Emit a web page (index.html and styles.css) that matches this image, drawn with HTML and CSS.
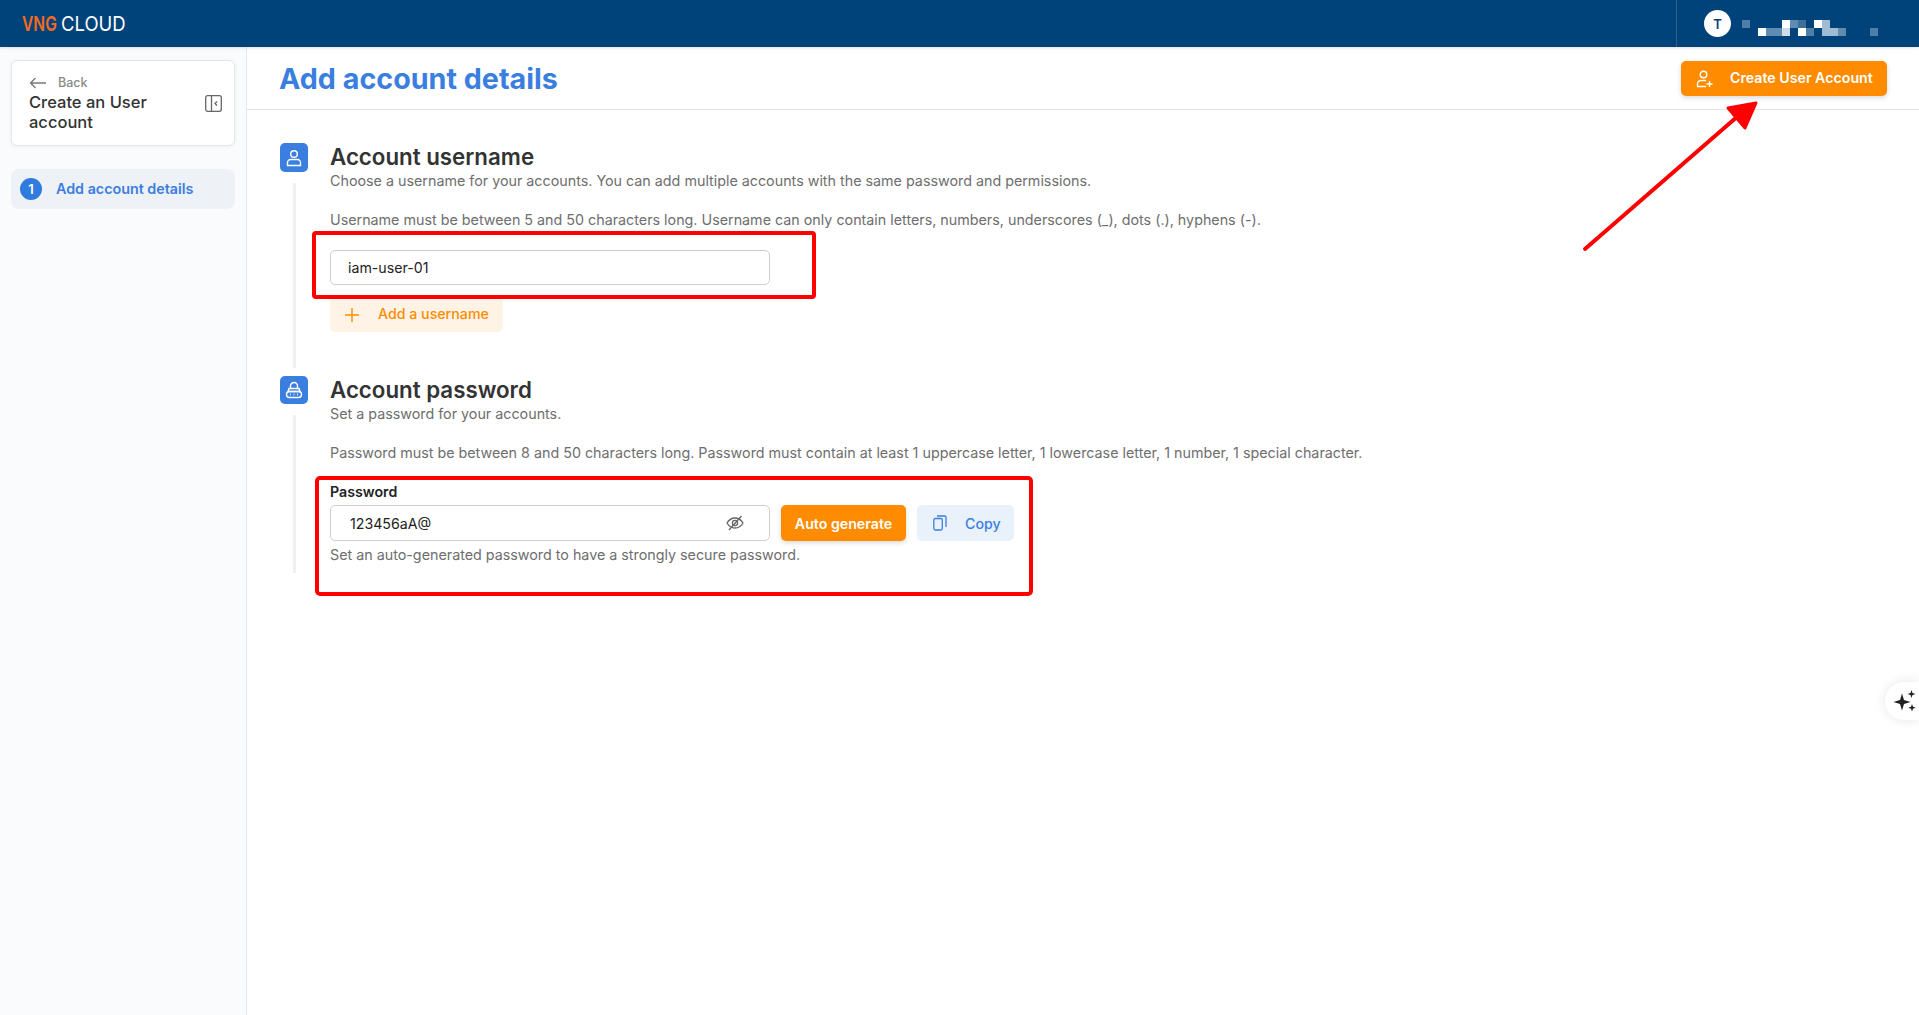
FILE: index.html
```html
<!DOCTYPE html>
<html lang="en">
<head>
<meta charset="utf-8">
<title>Add account details</title>
<link rel="stylesheet" href="styles.css">
</head>
<body>
<header class="topbar">
  <div class="logo"><span class="logo-vng">VNG</span><span class="logo-cloud">CLOUD</span></div>
  <div class="user">
    <span class="avatar">T</span>
    <svg class="redacted" width="140" height="16" viewBox="0 0 140 16" shape-rendering="crispEdges">
      <rect x="0" y="0" width="8" height="8" fill="#4f7ea6"/>
      <rect x="40" y="0" width="8" height="8" fill="#fff"/>
      <rect x="48" y="0" width="8" height="8" fill="#5f8cb0"/>
      <rect x="56" y="0" width="8" height="8" fill="#3f7099"/>
      <rect x="72" y="0" width="8" height="8" fill="#fff"/>
      <rect x="80" y="0" width="8" height="8" fill="#a0bbd2"/>
      <rect x="16" y="8" width="8" height="8" fill="#fff"/>
      <rect x="24" y="8" width="16" height="8" fill="#5f8cb0"/>
      <rect x="40" y="8" width="8" height="8" fill="#d0dde8"/>
      <rect x="56" y="8" width="8" height="8" fill="#fff"/>
      <rect x="64" y="8" width="8" height="8" fill="#4f7ea6"/>
      <rect x="80" y="8" width="16" height="8" fill="#a0bbd2"/>
      <rect x="96" y="8" width="8" height="8" fill="#5f8cb0"/>
      <rect x="128" y="8" width="8" height="8" fill="#4f7ea6"/>
    </svg>
  </div>
</header>
<div class="shell">
  <aside class="sidebar">
    <div class="back-card">
      <div class="back-text">
        <div class="back-link">
          <svg width="18" height="12" viewBox="0 0 18 12" fill="none" stroke="#777" stroke-width="1.3"><path d="M17 6H1.5M6.5 1 1.5 6l5 5"/></svg>
          <span>Back</span>
        </div>
        <div class="back-title">Create an User account</div>
      </div>
      <svg class="collapse" width="17" height="17" viewBox="0 0 17 17" fill="none" stroke="#666" stroke-width="1.3"><rect x=".7" y=".7" width="15.6" height="15.6" rx="2"/><path d="M6.5 1v15M12 6.5 10 8.500l2 2"/></svg>
    </div>
    <div class="step">
      <span class="step-num">1</span>
      <span class="nudge-up">Add account details</span>
    </div>
  </aside>
  <main class="main">
    <div class="page-head">
      <h1>Add account details</h1>
      <button class="btn btn-primary btn-create">
        <svg width="18" height="18" viewBox="0 0 18 18" fill="none" stroke="#fff" stroke-width="1.4"><circle cx="7.500" cy="4.500" r="3.300"/><path d="M10 10.500H5a3.500 3.500 0 0 0-3.500 3.500v2.500H10M13.500 11v6M10.500 14h6"/></svg>
        <span class="nudge-up">Create User Account</span>
      </button>
    </div>
    <div class="content">
      <section class="block block-user">
        <div class="rail">
          <span class="rail-icon">
            <svg width="18" height="18" viewBox="0 0 18 18" fill="none" stroke="#fff" stroke-width="1.4"><circle cx="9" cy="5" r="3.300"/><path d="M5.500 10.500h7a3 3 0 0 1 3 3v3h-13v-3a3 3 0 0 1 3-3Z"/></svg>
          </span>
          <span class="rail-line"></span>
        </div>
        <div class="body">
          <h2>Account username</h2>
          <p class="muted">Choose a username for your accounts. You can add multiple accounts with the same password and permissions.</p>
          <p class="muted rule">Username must be between 5 and 50 characters long. Username can only contain letters, numbers, underscores (_), dots (.), hyphens (-).</p>
          <div class="field field-user">iam-user-01</div>
          <button class="btn btn-soft-orange">
            <svg width="16" height="16" viewBox="0 0 16 16" stroke="#ff8c00" stroke-width="1.400"><path d="M8 1v14M1 8h14"/></svg>
            <span class="nudge-up">Add a username</span>
          </button>
        </div>
      </section>
      <section class="block block-pass">
        <div class="rail">
          <span class="rail-icon">
            <svg width="20" height="20" viewBox="0 0 20 20" fill="none" stroke="#fff" stroke-width="1.400"><path d="M6.500 8.500V6a3.500 3.500 0 0 1 7 0v2.500M5 8.500h10l1 3H4Z"/><rect x="2.500" y="11.500" width="15" height="6" rx="3"/><path d="M6 14.500h.8M9.600 14.500h.8M13.200 14.500h.8" stroke-width="1.800"/></svg>
          </span>
          <span class="rail-line"></span>
        </div>
        <div class="body">
          <h2>Account password</h2>
          <p class="muted">Set a password for your accounts.</p>
          <p class="muted rule">Password must be between 8 and 50 characters long. Password must contain at least 1 uppercase letter, 1 lowercase letter, 1 number, 1 special character.</p>
          <div class="label">Password</div>
          <div class="pass-row">
            <div class="field field-pass">
              <span>123456aA@</span>
              <svg width="18" height="16" viewBox="0 0 18 16" fill="none" stroke="#666" stroke-width="1.300"><path d="M1 8s3-5 8-5 8 5 8 5-3 5-8 5-8-5-8-5Z"/><circle cx="9" cy="8" r="2.600"/><path d="M15.500 1 3 15"/></svg>
            </div>
            <button class="btn btn-primary btn-auto">Auto generate</button>
            <button class="btn btn-soft-blue">
              <svg width="14" height="16" viewBox="0 0 14 16" fill="none" stroke="#3a7fe0" stroke-width="1.300"><rect x=".8" y="3.500" width="8.500" height="11.500" rx="1.500"/><path d="M4 1h7.500A1.500 1.500 0 0 1 13 2.500V12"/></svg>
              <span>Copy</span>
            </button>
          </div>
          <p class="muted hint">Set an auto-generated password to have a strongly secure password.</p>
        </div>
      </section>
    </div>
  </main>
</div>
<div class="float-ai">
  <svg width="24" height="24" viewBox="0 0 24 24" fill="#222"><path d="M9 4.500 11 11l6.500 2L11 15l-2 6.500L7 15l-6.500-2L7 11ZM18.500 1l1 3 3 1-3 1-1 3-1-3-3-1 3-1ZM19 15l1 2.700 2.700 1-2.700 1-1 2.800-1-2.800-2.700-1 2.700-1Z"/></svg>
</div>
<svg class="marks" width="1919" height="1015" viewBox="0 0 1919 1015" fill="none" stroke="#f00" stroke-width="4">
  <rect x="314" y="233" width="500" height="64" rx="2"/>
  <rect x="317" y="478" width="714" height="116" rx="3"/>
  <path d="M1585 249 1738 116" stroke-linecap="round"/>
  <path d="M1728 108 1756 103 1745 128Z" fill="#f00" stroke-width="3" stroke-linejoin="round"/>
</svg>
</body>
</html>
```
FILE: styles.css
```css
* { box-sizing: border-box; }
html, body { margin: 0; height: 100%; overflow: hidden; }
body {
  font-family: Inter, "Liberation Sans", sans-serif;
  color: #333;
  background: #fff;
  display: flex;
  flex-direction: column;
  position: relative;
}
p, h1, h2 { margin: 0; }

.topbar {
  height: 47px;
  flex: none;
  background: #00437a;
  display: flex;
  justify-content: space-between;
  align-items: center;
  padding-left: 22px;
  box-shadow: 0 1px 3px rgba(0,0,0,.12);
  z-index: 2;
}
.logo { display: flex; gap: 4px; font-size: 20.500px; line-height: 24px; }
.logo-vng, .logo-cloud { display: block; white-space: nowrap; transform-origin: left center; }
.logo-vng { width: 35px; color: #f26b21; font-weight: 600; transform: scaleX(.76); }
.logo-cloud { width: 64px; color: #fff; font-weight: 400; transform: scaleX(.9); }
.user {
  width: 243px;
  height: 47px;
  border-left: 1px solid #2a6191;
  display: flex;
  align-items: center;
  padding-left: 27px;
  gap: 11px;
}
.avatar {
  width: 27px;
  height: 27px;
  border-radius: 50%;
  background: #fff;
  color: #00437a;
  font-size: 13px;
  font-weight: 600;
  display: flex;
  align-items: center;
  justify-content: center;
}
.redacted { display: block; margin-top: 8px; }

.shell { flex: 1; display: flex; min-height: 0; }
.sidebar {
  width: 247px;
  flex: none;
  background: #f9fbfd;
  border-right: 1px solid #e4e7eb;
  padding: 13px 11px 0 11px;
}
.back-card {
  height: 86px;
  background: #fff;
  border: 1px solid #e2e6ec;
  border-radius: 6px;
  box-shadow: 0 1px 4px rgba(0,0,0,.05);
  display: flex;
  align-items: center;
  padding: 0 12px 0 17px;
  gap: 8px;
}
.back-text { flex: 1; }
.back-link {
  display: flex;
  align-items: center;
  gap: 11px;
  font-size: 12.500px;
  font-weight: 500;
  line-height: 17px;
  color: #8a8a8a;
}
.back-title { margin-top: 1px; font-size: 16.500px; font-weight: 500; line-height: 20px; color: #333; }
.collapse { flex: none; margin-top: 1px; }
.step {
  margin-top: 23px;
  height: 40px;
  border-radius: 8px;
  background: #eef1f6;
  display: flex;
  align-items: center;
  padding-left: 9px;
  gap: 14px;
  font-size: 14.300px;
  font-weight: 600;
  color: #3a7fe0;
}
.step-num {
  width: 22px;
  height: 22px;
  border-radius: 50%;
  background: #2f7be0;
  color: #fff;
  font-size: 13px;
  display: flex;
  align-items: center;
  justify-content: center;
}
.nudge-up { margin-bottom: 2px; }

.main { flex: 1; min-width: 0; }
.page-head {
  height: 63px;
  border-bottom: 1px solid #e3e3e3;
  display: flex;
  justify-content: space-between;
  align-items: center;
  padding: 0 32px 0 32px;
}
h1 { font-size: 28.700px; line-height: 36px; font-weight: 700; color: #3a7fe0; margin-top: 2px; }

.btn {
  font-family: inherit;
  border: 0;
  border-radius: 5px;
  display: inline-flex;
  align-items: center;
  font-size: 14.200px;
  font-weight: 600;
  padding: 0;
}
.btn-primary { background: #ff8c00; color: #fff; box-shadow: 0 2px 5px rgba(0,0,0,.15); }
.btn-create { width: 206px; height: 35px; padding-left: 15px; gap: 16px; margin-top: 1px; }
.btn-auto { width: 125px; height: 36px; justify-content: center; }
.btn-soft-orange {
  width: 173px;
  height: 35px;
  margin-top: 12px;
  background: #fff3e5;
  color: #ff8c00;
  font-weight: 500;
  padding-left: 14px;
  gap: 18px;
}
.btn-soft-blue {
  width: 97px;
  height: 36px;
  background: #e9f1fb;
  color: #3a7fe0;
  font-weight: 500;
  padding-left: 16px;
  gap: 18px;
}

.content { padding: 33px 0 0 33px; }
.block { display: flex; gap: 22px; }
.block-user { height: 233px; }
.block-pass { height: 200px; }
.rail { width: 28px; flex: none; display: flex; flex-direction: column; align-items: center; }
.rail-icon {
  flex: none;
  width: 28px;
  border-radius: 5px;
  background: #3a7fe0;
  display: flex;
  align-items: center;
  justify-content: center;
}
.block-user .rail-icon { height: 29px; }
.block-pass .rail-icon { height: 28px; }
.rail-line { width: 3px; flex: none; margin-top: 11px; background: #f0f0f0; }
.block-user .rail-line { height: 185px; }
.block-pass .rail-line { height: 158px; }

h2 { font-size: 22.300px; line-height: 27px; font-weight: 600; color: #333; }
h2 + .muted { margin-top: 1px; }
.muted { font-size: 14.300px; line-height: 20px; color: #6e6e6e; }
.muted.rule { margin-top: 19px; }
.field {
  width: 440px;
  border: 1px solid #cfcfcf;
  border-radius: 5px;
  background: #fff;
  font-size: 14.200px;
  color: #222;
  display: flex;
  align-items: center;
}
.field-user { height: 35px; margin-top: 20px; padding-left: 17px; }
.field-pass { height: 36px; padding: 0 25px 0 19px; justify-content: space-between; flex: none; }
.label { margin-top: 17px; font-size: 14.200px; line-height: 18px; font-weight: 600; color: #222; height: 25px; padding-top: 3px; }
.pass-row { display: flex; gap: 11px; align-items: center; }
.muted.hint { margin-top: 4px; }

.float-ai {
  position: absolute;
  right: 0;
  top: 682px;
  width: 34px;
  height: 38px;
  background: #fff;
  border-radius: 19px 0 0 19px;
  box-shadow: 0 0 12px rgba(0,0,0,.1);
  display: flex;
  align-items: center;
  padding-left: 8px;
}
.marks { position: absolute; left: 0; top: 0; pointer-events: none; }
```
